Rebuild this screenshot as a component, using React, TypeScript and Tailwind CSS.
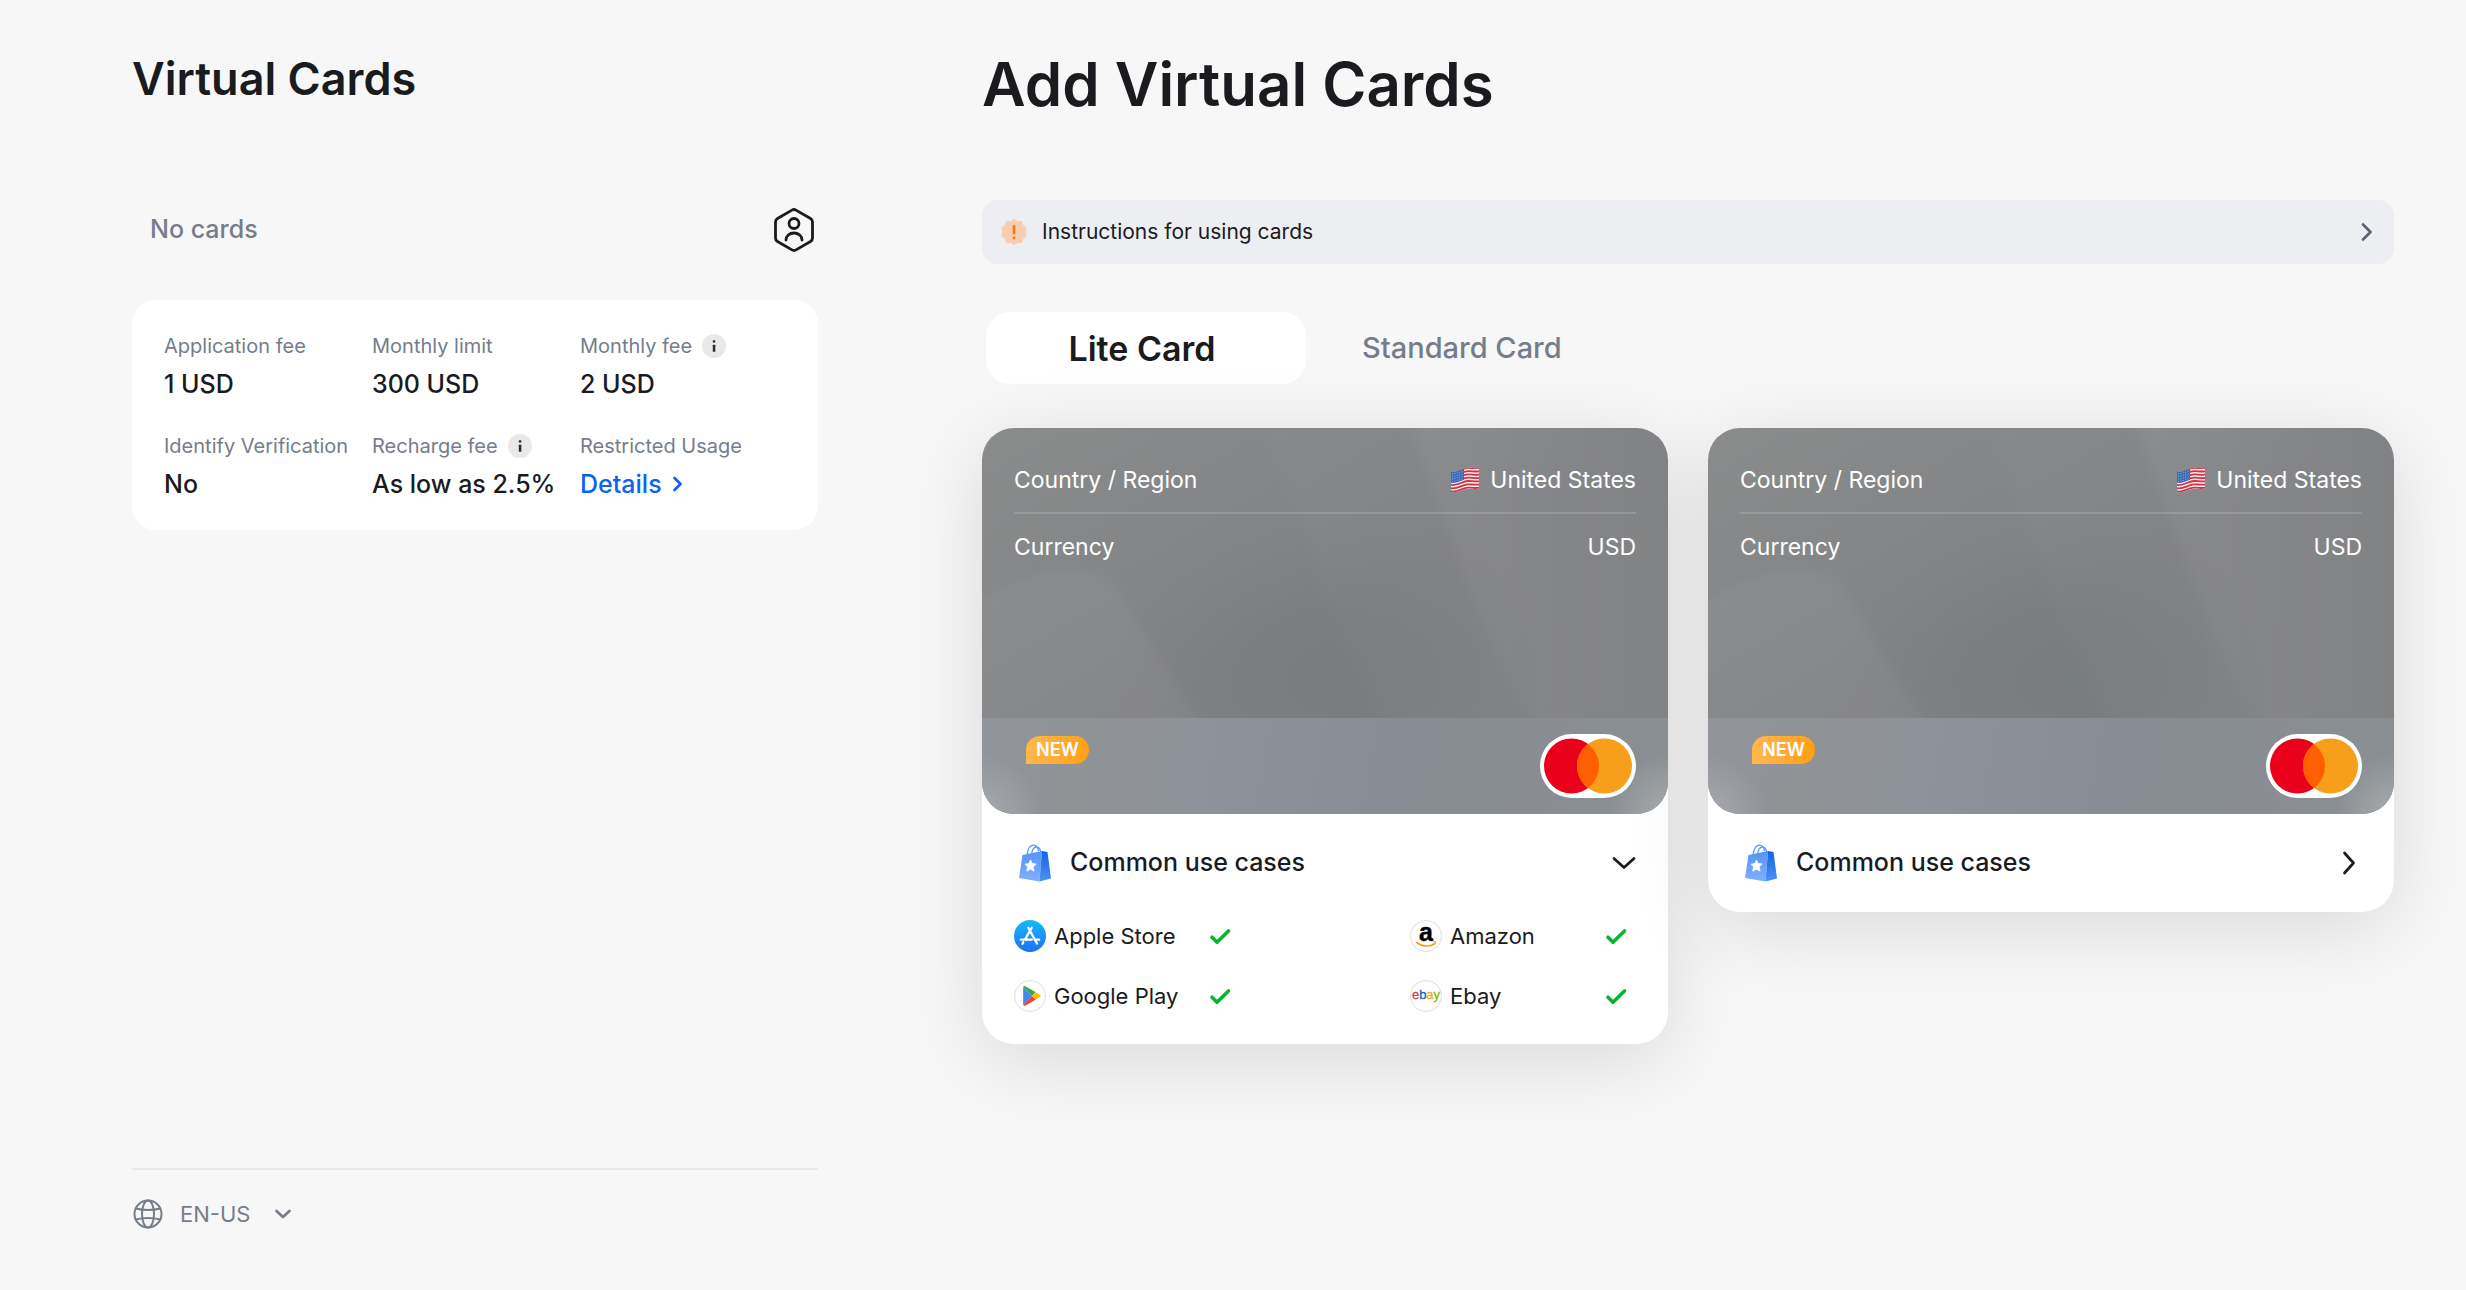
import React from "react";

const F = "font-['Inter','Liberation_Sans',sans-serif]";

function Info({ label }: { label: string }) {
  return (
    <button type="button" aria-label={label} className="flex size-6 items-center justify-center rounded-full bg-[#e9e9ea]">
      <svg viewBox="0 0 24 24" className="size-6" fill="#2a2b33">
        <rect x="10.8" y="6.200" width="2.500" height="2.400" rx=".4" />
        <rect x="10.8" y="10.800" width="2.500" height="7" rx=".4" />
      </svg>
    </button>
  );
}

function Flag() {
  return (
    <svg viewBox="0 0 30 26" className="h-[26px] w-[30px]" role="img" aria-label="US flag">
      <defs>
        <clipPath id="flag-clip">
          <path d="M1 4.500C7 6.500 12 1 18 .8c4-.1 7 .8 11 .2v20.500c-4 1-8-.2-12 .3-5 .6-10 4.500-16 3.200z" />
        </clipPath>
      </defs>
      <g clipPath="url(#flag-clip)">
        <rect width="30" height="26" fill="#f3eeee" />
        {[0, 1, 2, 3, 4, 5, 6].map((i) => (
          <path key={i} transform={`translate(0 ${i * 3.3})`} d="M0 4.500C7 6.500 12 1 18 .8c4-.1 7 .8 12 .2" fill="none" stroke="#cf3348" strokeWidth="1.800" />
        ))}
        <path d="M0 3h1c5 2 9-1.500 13-2.700v12.500C9 14 6 17 0 15.500z" fill="#3a6db4" />
        {[0, 1, 2, 3].map((r) =>
          [0, 1, 2, 3, 4].map((c) => <circle key={`${r}-${c}`} cx={2.5 + c * 2.4} cy={7 + r * 2.5 - c * 0.6} r=".5" fill="#a9c3e6" />)
        )}
      </g>
    </svg>
  );
}

function Bag() {
  return (
    <svg viewBox="0 0 34 38" className="h-[38px] w-[34px]" aria-hidden="true">
      <defs>
        <linearGradient id="bag-front" x1="0" y1="0" x2="0" y2="1"><stop offset="0" stopColor="#5594f6" /><stop offset="1" stopColor="#7db0ff" /></linearGradient>
        <linearGradient id="bag-side" x1="0" y1="0" x2="0" y2="1"><stop offset="0" stopColor="#1263e0" /><stop offset="1" stopColor="#4b91f8" /></linearGradient>
      </defs>
      <path d="M9 12C9.500 5 12 1.200 15.500 1.200c2.500 0 4.500 2 5 6M13.500 11c.5-5 2.500-8 5-8 2 0 3.700 2 4.200 5" fill="none" stroke="#5c9af7" strokeWidth="1.300" />
      <path d="M4.500 11L24 7l-2.500 30.500L1 34z" fill="url(#bag-front)" />
      <path d="M24 7l5.500 1L33 34.500l-11.500 3z" fill="url(#bag-side)" />
      <path d="M12.500 16l1.700 3.600 4 .4-3 3 .9 4.200-3.600-2-3.800 2 1-4.200-2.700-2.800 3.900-.6z" fill="#fff" stroke="#fff" strokeWidth=".8" strokeLinejoin="round" />
    </svg>
  );
}

function Mastercard() {
  return (
    <svg viewBox="0 0 96 64" className="h-16 w-24" role="img" aria-label="Mastercard">
      <rect width="96" height="64" rx="32" fill="#fff" />
      <circle cx="31.500" cy="32" r="27.500" fill="#eb001b" />
      <circle cx="64.500" cy="32" r="27.500" fill="#f79e1b" />
      <path d="M48 10a27.500 27.500 0 0 1 0 44 27.500 27.500 0 0 1 0-44z" fill="#ff5f00" />
    </svg>
  );
}

const Chevron = ({ d, box, cls }: { d: string; box: string; cls: string }) => (
  <svg viewBox={box} className={cls} fill="none" stroke="currentColor" strokeWidth="2.700" strokeLinecap="round" strokeLinejoin="round" aria-hidden="true">
    <path d={d} />
  </svg>
);

function AppStoreIcon() {
  return (
    <svg viewBox="0 0 32 32" className="size-8" aria-hidden="true">
      <defs><linearGradient id="as" x1="0" y1="0" x2="0" y2="1"><stop offset="0" stopColor="#19b9fd" /><stop offset="1" stopColor="#1d70f2" /></linearGradient></defs>
      <circle cx="16" cy="16" r="16" fill="url(#as)" />
      <g stroke="#fff" strokeWidth="2.300" strokeLinecap="round" fill="none">
        <path d="M17.700 7.800L11 19.500M14.300 7.800L23 23.500M6.800 19.700h11M21.500 19.700h3.700M9.300 22.300l-.8 1.400" />
      </g>
    </svg>
  );
}

const Ring = ({ children }: { children: React.ReactNode }) => (
  <svg viewBox="0 0 32 32" className="size-8 overflow-visible" aria-hidden="true">
    <circle cx="16" cy="16" r="15.400" fill="#fff" stroke="#e3e4e8" strokeWidth="1.200" />
    {children}
  </svg>
);

const PlayIcon = () => (
  <Ring>
    <path d="M9.200 7.200v17.600L17.800 16z" fill="#4285f4" />
    <path d="M9.200 7.200c.3-1.200 1.400-1.300 2.300-.8l10 5.700L17.800 16z" fill="#34a853" />
    <path d="M21.500 12.100l4.300 2.600c1 .6 1 1.900 0 2.500l-4.300 2.600L17.800 16z" fill="#fbbc04" />
    <path d="M9.200 24.800c.3 1.100 1.400 1.300 2.300.8l10-5.800L17.800 16z" fill="#ea4335" />
  </Ring>
);

const AmazonIcon = () => (
  <Ring>
    <text x="16" y="21" textAnchor="middle" fontFamily="Liberation Sans" fontWeight="700" fontSize="25" fill="#000" stroke="#000" strokeWidth=".4">a</text>
    <path d="M6.500 22.300c6 4.800 13.500 4.800 18.300 1.300" fill="none" stroke="#ff9900" strokeWidth="1.500" strokeLinecap="round" />
    <path d="M23 21.700c1.500-.3 2.500-.2 2.800.2.100 1-.4 2.200-1.200 3" fill="none" stroke="#ff9900" strokeWidth="1" />
  </Ring>
);

const EbayIcon = () => (
  <Ring>
    <text x="16" y="19" textAnchor="middle" fontFamily="Liberation Sans" fontSize="13" strokeWidth=".3">
      <tspan fill="#e53238" stroke="#e53238">e</tspan><tspan fill="#0064d2" stroke="#0064d2">b</tspan><tspan fill="#f5af02" stroke="#f5af02">a</tspan><tspan fill="#86b817" stroke="#86b817">y</tspan>
    </text>
  </Ring>
);

function UseCase({ icon, name }: { icon: React.ReactNode; name: string }) {
  return (
    <li className="flex h-8 w-[226px] items-center gap-2">
      {icon}
      <span className="flex-1 text-[22px] leading-8">{name}</span>
      <svg viewBox="0 0 32 32" className="size-8" fill="none" stroke="#05b62c" strokeWidth="3.600" strokeLinecap="round" strokeLinejoin="round" role="img" aria-label="Supported">
        <path d="M4 17.200l5 5L20.500 11" />
      </svg>
    </li>
  );
}

function VirtualCard({ open }: { open?: boolean }) {
  return (
    <article className="min-w-0 flex-1 rounded-[32px] bg-white shadow-[0_16px_80px_rgba(0,0,0,0.12)]">
      <div className="relative z-10 flex h-[386px] flex-col overflow-hidden rounded-[32px] bg-[linear-gradient(150deg,#8a8b8b_0%,#808184_50%,#808183_100%)]">
        <svg viewBox="0 0 686 290" preserveAspectRatio="none" className="absolute inset-0 h-[290px] w-full" aria-hidden="true">
          <defs>
            <linearGradient id="sheen" x1="0" y1="0" x2="1" y2="0"><stop offset="0" stopColor="#fff" stopOpacity=".07" /><stop offset="1" stopColor="#fff" stopOpacity="0" /></linearGradient>
            <radialGradient id="glow"><stop offset="0" stopColor="#747a7d" stopOpacity=".7" /><stop offset="1" stopColor="#747a7d" stopOpacity="0" /></radialGradient>
            <filter id="soft" x="-10%" y="-10%" width="120%" height="120%"><feGaussianBlur stdDeviation="7" /></filter>
          </defs>
          <ellipse cx="360" cy="250" rx="230" ry="160" fill="url(#glow)" />
          <g filter="url(#soft)">
            <path d="M415 -40h330v380H575L510 220z" fill="url(#sheen)" />
            <path d="M265 -40h150l95 260 65 120H430L340 160z" fill="#fff" fillOpacity=".015" />
            <path d="M-30 190c80-55 140-60 165-30l115 190H-30z" fill="#fff" fillOpacity=".045" />
          </g>
        </svg>
        <dl className="relative flex-1 px-8 pt-5 text-[23px] text-white">
          <div className="flex h-[66px] items-center justify-between border-b-2 border-white/15">
            <dt>Country / Region</dt>
            <dd className="flex items-center gap-2.5"><Flag />United States</dd>
          </div>
          <div className="flex h-[66px] items-center justify-between">
            <dt>Currency</dt>
            <dd>USD</dd>
          </div>
        </dl>
        <div className="relative flex h-24 items-start justify-between bg-[radial-gradient(circle_at_0%_100%,rgba(255,255,255,0.2),transparent_60px),radial-gradient(circle_at_100%_100%,rgba(255,255,255,0.25),transparent_60px),linear-gradient(100deg,#91949b_0%,#8f9396_15%,#8e929a_30%,#888c94_60%,#8a8f92_100%)] px-8 pt-4">
          <span className="mt-0.5 ml-3 h-7 rounded-[14px] rounded-bl-none bg-linear-to-r from-[#ffb84d] to-[#ff9f0f] px-2.5 text-lg leading-7 font-semibold text-white">NEW</span>
          <Mastercard />
        </div>
      </div>
      <button type="button" aria-expanded={!!open} className="flex h-[98px] w-full items-center gap-[18px] pr-8 pl-9 text-[25px] font-medium">
        <Bag />
        <span className="flex-1 text-left">Common use cases</span>
        {open ? <Chevron box="0 0 24 14" cls="h-[14px] w-6" d="M2 2.500l10 9 10-9" /> : <Chevron box="0 0 14 24" cls="mr-1.5 h-6 w-[14px]" d="M2.500 2l9 10-9 10" />}
      </button>
      {open && (
        <ul className="grid grid-cols-[auto_auto] justify-between gap-y-7 px-8 pt-2 pb-8">
          <UseCase icon={<AppStoreIcon />} name="Apple Store" />
          <UseCase icon={<AmazonIcon />} name="Amazon" />
          <UseCase icon={<PlayIcon />} name="Google Play" />
          <UseCase icon={<EbayIcon />} name="Ebay" />
        </ul>
      )}
    </article>
  );
}

function Fact({ label, value, info }: { label: string; value: React.ReactNode; info?: boolean }) {
  return (
    <div>
      <dt className="flex h-7 items-center gap-2.5 text-xl whitespace-nowrap text-[#767d8a]">
        {label}
        {info && <Info label={`About ${label}`} />}
      </dt>
      <dd className="mt-1 text-[25px] leading-10 font-medium whitespace-nowrap">{value}</dd>
    </div>
  );
}

export default function App() {
  return (
    <div className={`flex min-h-screen bg-[#f7f7f7] pr-[72px] pl-[132px] text-[#1a1b1e] ${F}`}>
      <aside className="flex w-[686px] shrink-0 flex-col pb-[60px]">
        <h1 className="pt-12 text-[45px] leading-[62px] font-semibold">Virtual Cards</h1>
        <div className="mt-24 flex items-center justify-between pl-[18px]">
          <p className="text-[25px] font-medium text-[#767d8a]">No cards</p>
          <button type="button" aria-label="Identity">
            <svg viewBox="0 0 48 48" className="size-12" fill="none" stroke="currentColor" strokeWidth="2.800" strokeLinecap="round" strokeLinejoin="round">
              <path d="M22 4.100a4 4 0 0 1 4 0l14.500 8.400a4 4 0 0 1 2 3.500v16a4 4 0 0 1-2 3.500L26 43.900a4 4 0 0 1-4 0L7.500 35.500a4 4 0 0 1-2-3.500V16a4 4 0 0 1 2-3.500z" />
              <circle cx="24" cy="17.500" r="5" />
              <path d="M16 34c0-4 3.500-7 8-7s8 3 8 7" />
            </svg>
          </button>
        </div>
        <dl className="mt-[46px] grid grid-cols-3 gap-y-7 rounded-[24px] bg-white pt-8 pr-[30px] pb-[26px] pl-8">
          <Fact label="Application fee" value="1 USD" />
          <Fact label="Monthly limit" value="300 USD" />
          <Fact label="Monthly fee" value="2 USD" info />
          <Fact label="Identify Verification" value="No" />
          <Fact label="Recharge fee" value="As low as 2.5%" info />
          <Fact
            label="Restricted Usage"
            value={
              <a href="#details" className="flex items-center gap-2.5 text-[#0b63f6]">
                Details <Chevron box="0 0 12 18" cls="h-[18px] w-3" d="M2.500 3l6 6-6 6" />
              </a>
            }
          />
        </dl>
        <div className="mt-auto border-t-2 border-[#e7e8ec] pt-7">
          <button type="button" className="flex h-8 items-center gap-4 text-[22px] text-[#767d8a]">
            <svg viewBox="0 0 32 32" className="size-8" fill="none" stroke="currentColor" strokeWidth="2" aria-hidden="true">
              <circle cx="16" cy="16" r="13.500" />
              <ellipse cx="16" cy="16" rx="6" ry="13.500" />
              <path d="M3.500 10.500q12.500 3 25 0M3.500 21.500q12.500-3 25 0" />
            </svg>
            EN-US
            <Chevron box="0 0 18 12" cls="ml-2 h-3 w-[18px]" d="M2.500 3l6.500 6 6.500-6" />
          </button>
        </div>
      </aside>
      <main className="ml-[164px] min-w-0 flex-1">
        <h2 className="pt-11 text-[60px] leading-20 font-semibold">Add Virtual Cards</h2>
        <button type="button" className="mt-[76px] flex h-16 w-full items-center rounded-2xl bg-[#edeef2] pr-5 pl-[18px] text-[21px]">
          <svg viewBox="0 0 28 28" className="size-7" aria-hidden="true">
            <path fill="#f6cdb0" stroke="#f6cdb0" strokeWidth="1.500" strokeLinejoin="round" d="M14 1.500l3.200 2.600 4.100-.3 1.400 3.900 3 2.200-.7 4.100.7 4-3 2.300-1.400 3.900-4.100-.2L14 26.500 10.800 24l-4.100.2-1.400-3.900-3-2.300.7-4-.7-4.100 3-2.200 1.400-3.900 4.100.3z" />
            <path d="M14 8.500v6.500M14 20v.1" stroke="#ff7a0a" strokeWidth="2.800" strokeLinecap="round" />
          </svg>
          <span className="ml-[14px] flex-1 text-left">Instructions for using cards</span>
          <Chevron box="0 0 14 22" cls="h-[22px] w-[14px] text-[#5d6470]" d="M3 3.500l7.500 7.500L3 18.500" />
        </button>
        <div role="tablist" className="mt-12 ml-1 flex h-[72px] items-center">
          <button type="button" role="tab" aria-selected="true" className="h-[72px] w-80 rounded-[24px] bg-white pr-2 text-[34px] font-semibold">Lite Card</button>
          <button type="button" role="tab" aria-selected="false" className="h-[72px] px-14 text-[29px] font-medium text-[#767d8a]">Standard Card</button>
        </div>
        <div className="mt-11 flex items-start gap-10">
          <VirtualCard open />
          <VirtualCard />
        </div>
      </main>
    </div>
  );
}
